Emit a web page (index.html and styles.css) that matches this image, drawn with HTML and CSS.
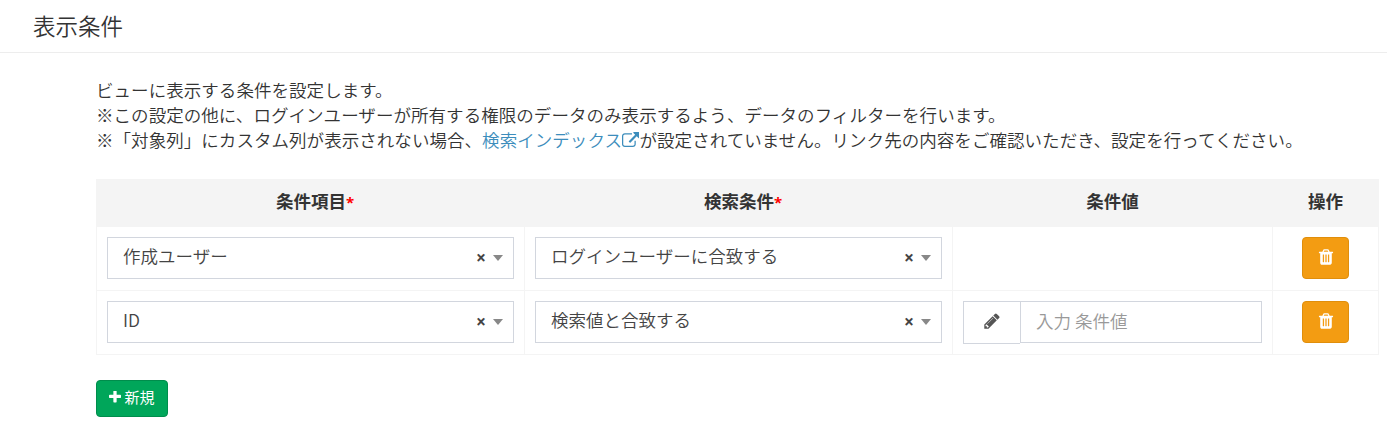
FILE: index.html
```html
<!DOCTYPE html>
<html lang="ja">
<head>
<meta charset="utf-8">
<title>表示条件</title>
<link rel="stylesheet" href="styles.css">
</head>
<body>
<svg class="defs" width="0" height="0">
  <symbol id="trash" viewBox="0 0 1792 1792"><path d="M704 1376v-704q0-14-9-23t-23-9h-64q-14 0-23 9t-9 23v704q0 14 9 23t23 9h64q14 0 23-9t9-23zm256 0v-704q0-14-9-23t-23-9h-64q-14 0-23 9t-9 23v704q0 14 9 23t23 9h64q14 0 23-9t9-23zm256 0v-704q0-14-9-23t-23-9h-64q-14 0-23 9t-9 23v704q0 14 9 23t23 9h64q14 0 23-9t9-23zm-544-992h448l-48-117q-7-9-17-11h-317q-10 2-17 11zm928 32v64q0 14-9 23t-23 9h-96v948q0 83-47 143.5t-113 60.5h-832q-66 0-113-58.5t-47-141.5v-952h-96q-14 0-23-9t-9-23v-64q0-14 9-23t23-9h309l70-167q15-37 54-63t79-26h320q40 0 79 26t54 63l70 167h309q14 0 23 9t9 23z"/></symbol>
  <symbol id="pencil" viewBox="0 0 1792 1792"><path d="M491 1536l91-91-235-235-91 91v107h128v128h107zm523-928q0-22-22-22-10 0-17 7l-542 542q-7 7-7 17 0 22 22 22 10 0 17-7l542-542q7-7 7-17zm-54-192l416 416-832 832h-416v-416zm683 96q0 53-37 90l-166 166-416-416 166-165q36-38 90-38 53 0 91 38l235 234q37 39 37 91z"/></symbol>
  <symbol id="plus" viewBox="192 192 1408 1408"><path d="M1600 736v192q0 40-28 68t-68 28h-416v416q0 40-28 68t-68 28h-192q-40 0-68-28t-28-68v-416h-416q-40 0-68-28t-28-68v-192q0-40 28-68t68-28h416v-416q0-40 28-68t68-28h192q40 0 68 28t28 68v416h416q40 0 68 28t28 68z"/></symbol>
  <symbol id="external" viewBox="0 0 1792 1792"><path d="M1408 928v320q0 119-84.5 203.5t-203.5 84.5h-832q-119 0-203.5-84.5t-84.5-203.5v-832q0-119 84.5-203.5t203.5-84.5h704q14 0 23 9t9 23v64q0 14-9 23t-23 9h-704q-66 0-113 47t-47 113v832q0 66 47 113t113 47h832q66 0 113-47t47-113v-320q0-14 9-23t23-9h64q14 0 23 9t9 23zm384-864v512q0 26-19 45t-45 19-45-19l-176-176-652 652q-10 10-23 10t-23-10l-114-114q-10-10-10-23t10-23l652-652-176-176q-19-19-19-45t19-45 45-19h512q26 0 45 19t19 45z"/></symbol>
</svg>
<header class="box-header"><h4 class="title">表示条件</h4></header>
<main class="content">
  <p class="help">ビューに表示する条件を設定します。<br>※この設定の他に、ログインユーザーが所有する権限のデータのみ表示するよう、データのフィルターを行います。<br>※「対象列」にカスタム列が表示されない場合、<a class="link">検索インデックス<svg class="icon-external"><use href="#external"/></svg></a>が設定されていません。リンク先の内容をご確認いただき、設定を行ってください。</p>
  <div class="table">
    <div class="row head">
      <div class="cell labelled">条件項目<span class="required">*</span></div>
      <div class="cell labelled">検索条件<span class="required">*</span></div>
      <div class="cell">条件値</div>
      <div class="cell">操作</div>
    </div>
    <div class="row">
      <div class="cell"><div class="select"><span class="value">作成ユーザー</span><span class="clear">×</span><span class="arrow"></span></div></div>
      <div class="cell"><div class="select"><span class="value">ログインユーザーに合致する</span><span class="clear">×</span><span class="arrow"></span></div></div>
      <div class="cell"></div>
      <div class="cell action"><button class="remove"><svg class="icon"><use href="#trash"/></svg></button></div>
    </div>
    <div class="row">
      <div class="cell"><div class="select"><span class="value">ID</span><span class="clear">×</span><span class="arrow"></span></div></div>
      <div class="cell"><div class="select"><span class="value">検索値と合致する</span><span class="clear">×</span><span class="arrow"></span></div></div>
      <div class="cell"><div class="input-group"><span class="addon"><svg class="icon"><use href="#pencil"/></svg></span><input class="input" placeholder="入力 条件値"></div></div>
      <div class="cell action"><button class="remove"><svg class="icon"><use href="#trash"/></svg></button></div>
    </div>
  </div>
  <button class="add"><svg class="icon-plus"><use href="#plus"/></svg><span>新規</span></button>
</main>
</body>
</html>
```
FILE: styles.css
```css
* { box-sizing: border-box; }
body { margin: 0; background: #fff; color: #333; font: 350 17.5px/25px "Noto Sans CJK JP", sans-serif; overflow: hidden; }
.defs { display: block; }
svg { fill: currentColor; }
.box-header { height: 53px; padding: 13px 33px; border-bottom: 1px solid #ededed; }
.title { margin: 0; font-size: 22.5px; line-height: 25px; font-weight: 350; }
.content { padding: 24px 8px 0 96px; }
.help { margin: 0 0 27px; white-space: nowrap; letter-spacing: 0.05px; }
.link { color: #3c8dbc; }
.icon-external { width: 17.5px; height: 17.5px; vertical-align: -2px; }
.table { border: solid #f4f4f4; border-width: 0 1px 1px 0; }
.row { display: grid; grid-template-columns: 428px 428px 320px 1fr; height: 64px; }
.cell { min-width: 0; border: solid #f4f4f4; border-width: 1px 0 0 1px; padding: 10px; }
.head { height: 47px; background: #f4f4f4; font-weight: 700; text-align: center; }
.head .cell { padding-top: 8px; }
.head .labelled { padding-left: 19px; }
.required { color: #f00; font-family: "Open Sans", sans-serif; font-size: 15px; }
.select { display: flex; align-items: center; width: 407px; height: 42px; border: 1px solid #d2d6de; padding: 0 10px 0 15px; color: #444; }
.value { flex: 1; margin-top: -5px; }
.clear { font-family: "Open Sans", sans-serif; font-weight: 700; font-size: 17.5px; margin: -1px 7px 0 0; }
.arrow { border: solid transparent; border-width: 6px 5px 0; border-top-color: #888; }
.action { display: flex; justify-content: center; }
.remove { width: 47px; height: 42px; padding: 0 0 3px; border: 1px solid #e08e0b; border-radius: 4px; background: #f39c12; color: #fff; display: flex; align-items: center; justify-content: center; }
.icon { width: 18px; height: 18px; display: block; }
.input-group { display: flex; width: 299px; }
.addon { width: 57px; height: 43px; border: 1px solid #d2d6de; border-right: 0; display: flex; align-items: center; justify-content: center; color: #555; padding-bottom: 3px; }
.input { flex: 1; min-width: 0; height: 42px; border: 1px solid #d2d6de; padding: 0 15px 3px; font: inherit; }
.input::placeholder { color: #999; opacity: 1; }
.add { display: flex; align-items: center; justify-content: center; gap: 3px; width: 72px; height: 37px; margin-top: 25px; padding: 0 0 3px; border: 1px solid #008d4c; border-radius: 4px; background: #00a65a; color: #fff; font: 400 15px/20px "Noto Sans CJK JP", sans-serif; }
.icon-plus { width: 12px; height: 12px; }
```
